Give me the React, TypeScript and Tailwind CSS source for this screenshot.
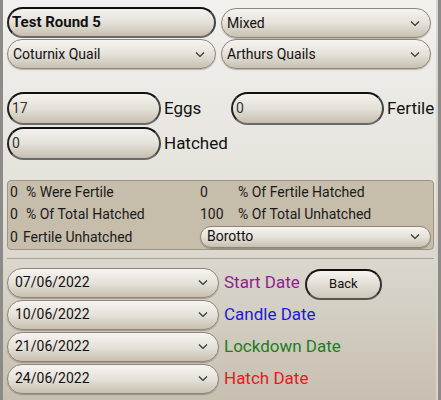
import React from 'react';

const font = { fontFamily: 'Roboto, "Noto Sans", sans-serif' };

function Chevron() {
  return (
    <svg width="10" height="7" viewBox="0 0 10 7" className="shrink-0">
      <path d="M1 1.5 L5 5.5 L9 1.5" fill="none" stroke="#333" strokeWidth="1.2" />
    </svg>
  );
}

function Select({ value, className = '', text = 'text-[14px]' }: { value: string; className?: string; text?: string }) {
  return (
    <div
      className={`flex shrink-0 items-center justify-between rounded-full border border-[#8d877b] bg-gradient-to-b from-[#f6f4f0] via-[#e6e2da] to-[#c7c0b1] shadow-[0_1px_1px_rgba(0,0,0,0.25)] pl-[5px] pr-[10px] ${text} text-[#111] ${className}`}
    >
      <span>{value}</span>
      <Chevron />
    </div>
  );
}

function Input({ value, className = '', bold = false }: { value: string; className?: string; bold?: boolean }) {
  return (
    <div
      className={`flex shrink-0 items-center rounded-full border-2 border-t-[#111] border-l-[#222] border-r-[#444] border-b-[#6a6a6a] bg-gradient-to-b from-[#f4f2ee] via-[#e5e1d9] to-[#c6bfb0] pl-[3px] ${bold ? 'font-bold text-[15px]' : 'text-[14px] text-[#333]'} ${className}`}
    >
      {value}
    </div>
  );
}

export default function App() {
  const dates = [
    { d: '07/06/2022', label: 'Start Date', color: 'text-[#8e1f8e]' },
    { d: '10/06/2022', label: 'Candle Date', color: 'text-[#1b1bd6]' },
    { d: '21/06/2022', label: 'Lockdown Date', color: 'text-[#1d7d1d]' },
    { d: '24/06/2022', label: 'Hatch Date', color: 'text-[#e01c1c]' },
  ];

  return (
    <div
      style={font}
      className="relative w-[441px] h-[400px] overflow-hidden bg-gradient-to-b from-[#f2f1ee] via-[#e4e1da] to-[#c7c0b1] text-[#111]"
    >
      <div className="absolute left-0 top-0 h-full w-[3px] bg-[#8c8b87]" />
      <div className="absolute right-0 top-0 h-full w-[5px] bg-[#8c8b87] border-l-[2px] border-[#d8d4cc]" />

      <div className="pl-[7px] pr-[10px] pt-[7px]">
        <div className="flex gap-[5px]">
          <Input value="Test Round 5" bold className="w-[209px] h-[31px]" />
          <Select value="Mixed" className="flex-1 h-[30px] mt-[1px]" />
        </div>
        <div className="flex gap-[5px] mt-[1px]">
          <Select value="Coturnix Quail" className="w-[209px] h-[30px]" />
          <Select value="Arthurs Quails" className="flex-1 h-[30px]" />
        </div>

        <div className="flex items-center mt-[23px] whitespace-nowrap">
          <Input value="17" className="w-[154px] h-[33px]" />
          <span className="ml-[3px] w-[67px] shrink-0 text-[17px]">Eggs</span>
          <Input value="0" className="w-[153px] h-[33px]" />
          <span className="ml-[3px] text-[17px]">Fertile</span>
        </div>
        <div className="flex items-center mt-[2px]">
          <Input value="0" className="w-[154px] h-[33px]" />
          <span className="ml-[3px] text-[17px]">Hatched</span>
        </div>
      </div>

      <div className="ml-[7px] mr-[7px] mt-[20px] rounded-[4px] border border-[#9c9484] bg-[#c6bdab] text-[14px] text-[#1a1a1a]">
        <div className="grid grid-cols-[190px_1fr] pl-[2px]">
          <div className="flex h-[22px] items-center"><span className="w-[16px]">0</span><span>% Were Fertile</span></div>
          <div className="flex h-[22px] items-center"><span className="w-[38px]">0</span><span>% Of Fertile Hatched</span></div>
          <div className="flex h-[22px] items-center"><span className="w-[16px]">0</span><span>% Of Total Hatched</span></div>
          <div className="flex h-[22px] items-center"><span className="w-[38px]">100</span><span>% Of Total Unhatched</span></div>
          <div className="flex h-[24px] items-center"><span className="w-[13px]">0</span><span>Fertile Unhatched</span></div>
          <div className="flex h-[24px] items-center pr-[2px] pb-[1px]">
            <Select value="Borotto" text="text-[14px]" className="w-full h-[22px] !pl-[6px]" />
          </div>
        </div>
      </div>

      <div className="mx-[7px] mt-[8px] h-[2px] border-t border-[#aaa395] bg-[#dcd8d0]" />

      <div className="pl-[7px] pt-[7px] flex flex-col gap-[1px]">
        {dates.map((r, i) => (
          <div key={r.d} className="flex items-center h-[31px]">
            <Select value={r.d} className="w-[212px] h-[30px] !pl-[7px]" />
            <span className={`ml-[5px] text-[17px] ${r.color}`}>{r.label}</span>
            {i === 0 && (
              <div className="ml-[5px] mt-[3px] flex h-[31px] w-[77px] items-center justify-center rounded-full border-2 border-t-[#111] border-l-[#222] border-r-[#333] border-b-[#555] bg-gradient-to-b from-[#f6f4f0] to-[#cfc8ba] text-[13px]">
                Back
              </div>
            )}
          </div>
        ))}
      </div>
    </div>
  );
}
